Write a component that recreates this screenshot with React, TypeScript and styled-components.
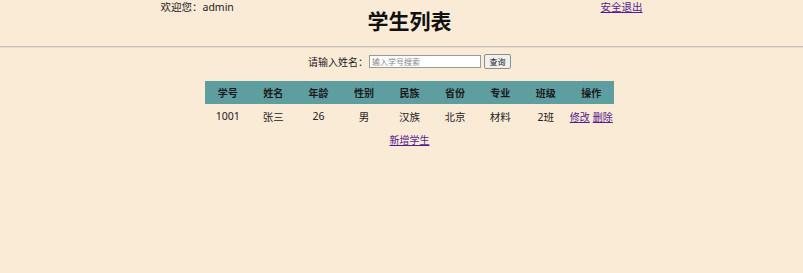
import React from "react";
import styled, { createGlobalStyle } from "styled-components";

const Global = createGlobalStyle`
  html, body { margin: 0; padding: 0; background: #faebd7; }
  body {
    font-family: "Noto Sans", "Noto Sans CJK SC", sans-serif;
    font-size: 10px;
    color: #222;
  }
`;

const Header = styled.header`
  display: grid;
  height: 46px;
`;

const TopBar = styled.div`
  grid-area: 1 / 1;
  width: 482px;
  margin: 0 auto;
  display: flex;
  justify-content: space-between;
  align-items: flex-start;
  line-height: 14px;
`;

const Welcome = styled.span`
  font-size: 10.5px;
`;

const Link = styled.a`
  color: #551a8b;
  text-decoration: underline;
  cursor: pointer;
`;

const Logout = styled(Link)`
  font-size: 10.5px;
`;

const Title = styled.h1`
  grid-area: 1 / 1;
  margin: 0;
  padding: 8px 0 0 16px;
  text-align: center;
  font-size: 21px;
  line-height: 26px;
  font-weight: 700;
  color: #111;
`;

const Divider = styled.div`
  border-top: 1px solid #c9c3ba;
  border-bottom: 1px solid #e2dcd2;
`;

const Main = styled.main`
  padding-left: 16px;
  display: flex;
  flex-direction: column;
  align-items: center;
`;

const SearchRow = styled.form`
  margin-top: 5px;
  display: flex;
  align-items: center;
  height: 16px;
`;

const Label = styled.span`
  font-size: 10px;
  margin-right: 1px;
`;

const Input = styled.input`
  box-sizing: border-box;
  width: 112px;
  height: 13px;
  padding: 0 2px;
  border: 1px solid #9a9a9a;
  background: #fff;
  font-size: 8px;
  font-family: inherit;
  &::placeholder { color: #888; }
`;

const Button = styled.button`
  box-sizing: border-box;
  width: 27px;
  height: 15px;
  margin-left: 3px;
  padding: 0;
  border: 1px solid #8f8f8f;
  border-radius: 2px;
  background: #efefef;
  font-size: 8px;
  font-family: inherit;
  color: #222;
`;

const Table = styled.table`
  margin-top: 12px;
  width: 409px;
  table-layout: fixed;
  border-collapse: collapse;
`;

const HeadCell = styled.th`
  background: #5f9ea0;
  height: 23px;
  padding: 0;
  font-weight: 700;
  font-size: 10px;
  color: #1a1a1a;
  text-align: center;
`;

const Cell = styled.td`
  height: 24px;
  padding: 0;
  text-align: center;
  font-size: 10.5px;
  white-space: nowrap;
`;

const Actions = styled.span`
  display: inline-flex;
  gap: 3px;
  font-size: 10px;
`;

const AddLink = styled(Link)`
  margin-top: 4px;
`;

const headers = ["学号", "姓名", "年龄", "性别", "民族", "省份", "专业", "班级", "操作"];
const rows = [["1001", "张三", "26", "男", "汉族", "北京", "材料", "2班"]];

export default function App() {
  return (
    <>
      <Global />
      <Header>
        <TopBar>
          <Welcome>欢迎您：admin</Welcome>
          <Logout>安全退出</Logout>
        </TopBar>
        <Title>学生列表</Title>
      </Header>
      <Divider />
      <Main>
        <SearchRow onSubmit={(e) => e.preventDefault()}>
          <Label>请输入姓名：</Label>
          <Input placeholder="输入学号搜索" />
          <Button type="submit">查询</Button>
        </SearchRow>
        <Table>
          <thead>
            <tr>
              {headers.map((h) => (
                <HeadCell key={h}>{h}</HeadCell>
              ))}
            </tr>
          </thead>
          <tbody>
            {rows.map((r) => (
              <tr key={r[0]}>
                {r.map((c, i) => (
                  <Cell key={i}>{c}</Cell>
                ))}
                <Cell>
                  <Actions>
                    <Link>修改</Link>
                    <Link>删除</Link>
                  </Actions>
                </Cell>
              </tr>
            ))}
          </tbody>
        </Table>
        <AddLink>新增学生</AddLink>
      </Main>
    </>
  );
}
